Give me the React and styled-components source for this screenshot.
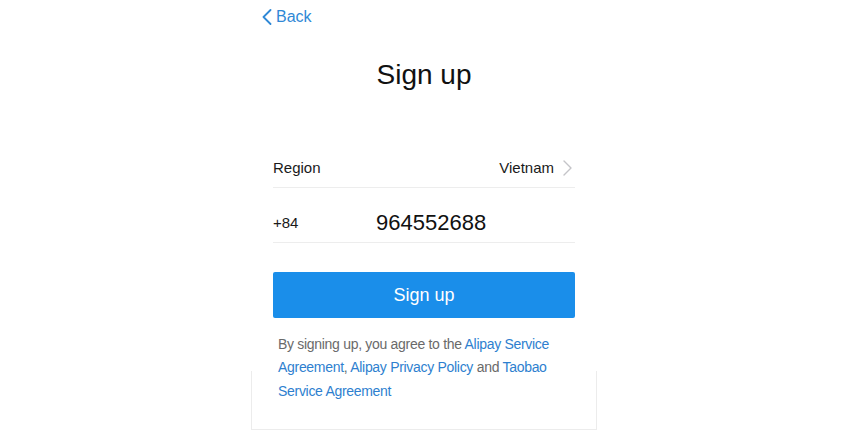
import React from 'react'
import styled, { createGlobalStyle } from 'styled-components'

const GlobalStyle = createGlobalStyle`
  html, body {
    margin: 0;
    padding: 0;
    background: #ffffff;
  }
  body {
    font-family: "Liberation Sans", Arial, sans-serif;
    -webkit-font-smoothing: antialiased;
  }
`

const Page = styled.div`
  width: 302px;
  margin: 0 auto;
  padding: 7px 2px 0 0;
  display: flex;
  flex-direction: column;
`

const BackLink = styled.a`
  display: flex;
  align-items: center;
  gap: 4px;
  height: 20px;
  margin-left: -11px;
  color: #2f88d6;
  font-size: 16px;
  line-height: 20px;
  text-decoration: none;
  cursor: pointer;
`

const Title = styled.h1`
  margin: 31px 0 0;
  text-align: center;
  font-size: 28px;
  line-height: 34px;
  font-weight: 400;
  color: #111;
`

const FormList = styled.div`
  margin-top: 41px;
  display: flex;
  flex-direction: column;
`

const Row = styled.div`
  display: flex;
  align-items: flex-end;
  height: 55px;
  box-sizing: border-box;
  padding-bottom: 10px;
  border-bottom: 1px solid #ededed;
`

const Label = styled.span`
  width: ${p => p.$width || 'auto'};
  font-size: 15px;
  line-height: 18px;
  color: #1a1a1a;
`

const Value = styled.span`
  margin-left: auto;
  padding-right: 3px;
  display: flex;
  align-items: center;
  gap: 9px;
  font-size: 15px;
  line-height: 18px;
  color: #1a1a1a;
`

const Phone = styled.span`
  margin-bottom: -2px;
  font-size: 22px;
  line-height: 22px;
  color: #111;
`

const SubmitButton = styled.button`
  margin-top: 29px;
  height: 46px;
  border: none;
  border-radius: 2px;
  background: #1a8eea;
  color: #ffffff;
  font-family: inherit;
  font-size: 18px;
  cursor: pointer;
`

const TermsArea = styled.div`
  margin-top: 15px;
  display: grid;
`

const Terms = styled.p`
  grid-area: 1 / 1;
  margin: 0;
  padding-left: 5px;
  font-size: 14px;
  letter-spacing: -0.3px;
  line-height: 23.4px;
  color: #6a6a6a;
  position: relative;
  z-index: 1;
`

const TermsLink = styled.a`
  color: #2e7fcf;
  text-decoration: none;
`

const Frame = styled.div`
  grid-area: 1 / 1;
  margin: 38px -22px 0;
  height: 59px;
  box-sizing: border-box;
  border: 1px solid #ececec;
  border-top: none;
`

const ChevronLeft = () => (
  <svg width="10" height="16" viewBox="0 0 10 16" fill="none">
    <path d="M8.5 1 L1.5 8 L8.5 15" stroke="#2f88d6" strokeWidth="1.8" strokeLinecap="round" strokeLinejoin="round" />
  </svg>
)

const ChevronRight = () => (
  <svg width="9" height="16" viewBox="0 0 9 16" fill="none">
    <path d="M1 1 L8 8 L1 15" stroke="#c4c4c8" strokeWidth="1.4" strokeLinecap="round" strokeLinejoin="round" />
  </svg>
)

const App = () => {
  return (
    <>
      <GlobalStyle />
      <Page>
        <BackLink>
          <ChevronLeft />
          Back
        </BackLink>
        <Title>Sign up</Title>
        <FormList>
          <Row>
            <Label>Region</Label>
            <Value>
              Vietnam
              <ChevronRight />
            </Value>
          </Row>
          <Row>
            <Label $width="103px">+84</Label>
            <Phone>964552688</Phone>
          </Row>
        </FormList>
        <SubmitButton type="button">Sign up</SubmitButton>
        <TermsArea>
          <Frame />
          <Terms>
            By signing up, you agree to the <TermsLink>Alipay Service</TermsLink>
            <br />
            <TermsLink>Agreement</TermsLink>, <TermsLink>Alipay Privacy Policy</TermsLink> and <TermsLink>Taobao</TermsLink>
            <br />
            <TermsLink>Service Agreement</TermsLink>
          </Terms>
        </TermsArea>
      </Page>
    </>
  )
}

export default App
